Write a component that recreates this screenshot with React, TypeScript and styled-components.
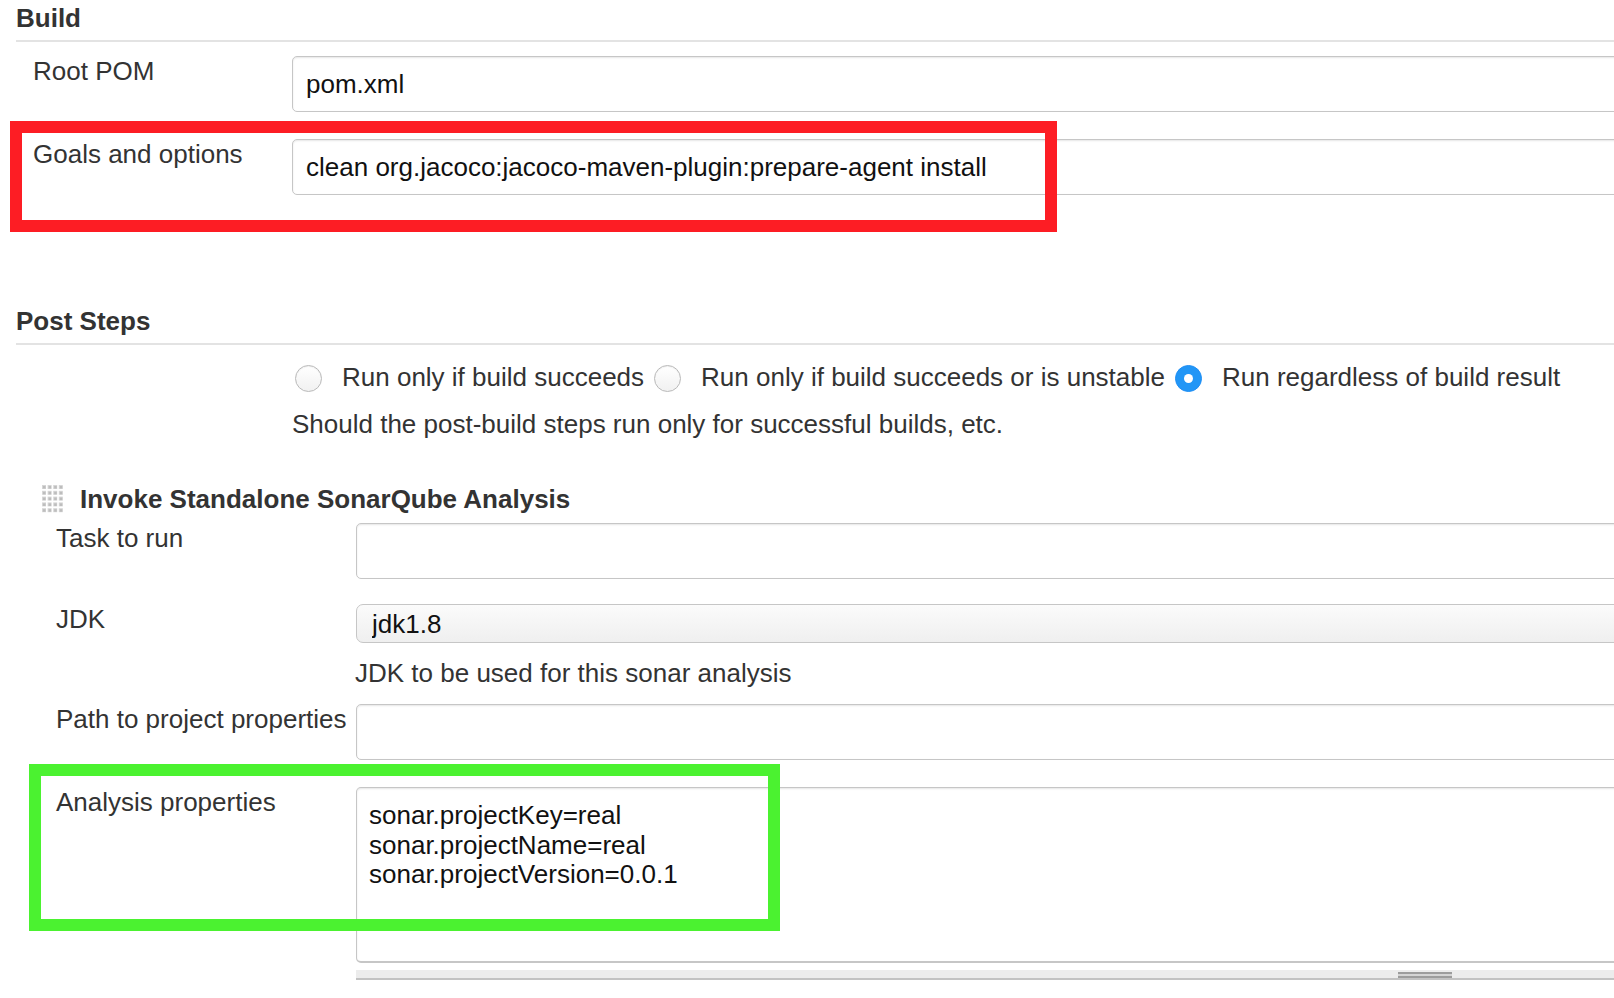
import React from "react";
import styled, { createGlobalStyle } from "styled-components";

const GlobalStyle = createGlobalStyle`
  html, body {
    margin: 0;
    padding: 0;
    background: #fff;
    overflow: hidden;
  }
  body {
    font-family: "Liberation Sans", Arial, Helvetica, sans-serif;
    font-size: 26px;
    color: #333;
  }
`;

// Grip handle drawn next to a build step title
const GripIcon = () => {
  const dots = [];
  for (let r = 0; r < 5; r++) {
    for (let c = 0; c < 4; c++) {
      dots.push(
        <g key={`${r}-${c}`}>
          <rect x={c * 5.6} y={r * 5.8} width={4} height={4} fill="#d6d6d6" />
          <rect x={c * 5.6 + 1} y={r * 5.8 + 1} width={2.5} height={2.5} fill="#bdbdbd" />
        </g>
      );
    }
  }
  return (
    <svg width="22" height="28" viewBox="0 0 22 28">
      {dots}
    </svg>
  );
};

const App: React.FC = () => {
  return (
    <>
      <GlobalStyle />
      <Page>
        <SectionHeader>Build</SectionHeader>

        <Row $indent={17} $top={14}>
          <Label $width={259}>Root POM</Label>
          <Field>
            <TextInput readOnly value="pom.xml" />
          </Field>
        </Row>

        <Row $indent={17} $top={27}>
          <Highlight $color="#fd1d24" style={{ left: -6, top: -18, width: 1047, height: 111 }} />
          <Label $width={259}>Goals and options</Label>
          <Field>
            <TextInput
              readOnly
              value="clean org.jacoco:jacoco-maven-plugin:prepare-agent install"
            />
          </Field>
        </Row>

        <SectionHeader $top={111}>Post Steps</SectionHeader>

        <RadioRow>
          <Radio $first />
          <RadioLabel>Run only if build succeeds</RadioLabel>
          <Radio />
          <RadioLabel>Run only if build succeeds or is unstable</RadioLabel>
          <Radio $checked />
          <RadioLabel>Run regardless of build result</RadioLabel>
        </RadioRow>

        <HelpText $indent={276} $top={17}>
          Should the post-build steps run only for successful builds, etc.
        </HelpText>

        <StepHeader>
          <GripIcon />
          <StepTitle>Invoke Standalone SonarQube Analysis</StepTitle>
        </StepHeader>

        <Row $indent={40} $top={9}>
          <Label $width={300}>Task to run</Label>
          <Field>
            <TextInput readOnly value="" />
          </Field>
        </Row>

        <Row $indent={40} $top={25}>
          <Label $width={300}>JDK</Label>
          <Field>
            <Select value="jdk1.8" onChange={() => undefined}>
              <option value="jdk1.8">jdk1.8</option>
            </Select>
          </Field>
        </Row>

        <HelpText $indent={339} $top={15}>
          JDK to be used for this sonar analysis
        </HelpText>

        <Row $indent={40} $top={16}>
          <Label $width={300}>Path to project properties</Label>
          <Field>
            <TextInput readOnly value="" />
          </Field>
        </Row>

        <Row $indent={40} $top={27}>
          <Highlight $color="#4bf230" style={{ left: 13, top: -23, width: 751, height: 167 }} />
          <Label $width={300}>Analysis properties</Label>
          <Field>
            <TextArea
              readOnly
              value={"sonar.projectKey=real\nsonar.projectName=real\nsonar.projectVersion=0.0.1"}
            />
          </Field>
        </Row>

        <ResizeBar>
          <ResizeGrip />
        </ResizeBar>
      </Page>
    </>
  );
};

export default App;

const Page = styled.div`
  padding: 3px 0 0 16px;
  display: flex;
  flex-direction: column;
`;

const SectionHeader = styled.div<{ $top?: number }>`
  margin-top: ${(p) => p.$top ?? 0}px;
  font-weight: bold;
  font-size: 26px;
  line-height: 30px;
  color: #333;
  padding-bottom: 7px;
  border-bottom: 2px solid #e3e3e3;
  margin-right: -40px;
`;

const Row = styled.div<{ $indent: number; $top: number }>`
  position: relative;
  display: flex;
  align-items: flex-start;
  margin-top: ${(p) => p.$top}px;
  padding-left: ${(p) => p.$indent}px;
`;

const Label = styled.div<{ $width: number }>`
  width: ${(p) => p.$width}px;
  flex-shrink: 0;
  line-height: 30px;
  color: #333;
  white-space: nowrap;
`;

const Field = styled.div`
  flex: 1;
  margin-right: -40px;
  display: flex;
  flex-direction: column;
`;

const TextInput = styled.input`
  box-sizing: border-box;
  width: 100%;
  height: 56px;
  margin: 0;
  padding: 0 13px;
  border: 1px solid #c6c6c6;
  border-radius: 5px;
  box-shadow: inset 0 1px 2px rgba(0, 0, 0, 0.1);
  font-family: "Liberation Sans", Arial, sans-serif;
  font-size: 26px;
  color: #111;
  background: #fff;
  outline: none;
`;

const Select = styled.select`
  box-sizing: border-box;
  width: 100%;
  height: 39px;
  margin: 0;
  padding: 0 15px;
  border: 1px solid #c6c6c6;
  border-radius: 7px;
  appearance: none;
  -webkit-appearance: none;
  background: linear-gradient(#fbfbfb, #efefef);
  font-family: "Liberation Sans", Arial, sans-serif;
  font-size: 26px;
  color: #111;
  outline: none;
`;

const TextArea = styled.textarea`
  box-sizing: border-box;
  width: 100%;
  height: 176px;
  margin: 0;
  padding: 13px 12px 12px;
  border: 1px solid #c6c6c6;
  border-bottom-width: 2px;
  border-radius: 5px;
  box-shadow: inset 0 1px 2px rgba(0, 0, 0, 0.1);
  font-family: "Liberation Sans", Arial, sans-serif;
  font-size: 26px;
  line-height: 29.6px;
  color: #111;
  background: #fff;
  resize: none;
  overflow: hidden;
  outline: none;
  display: block;
`;

const Highlight = styled.div<{ $color: string }>`
  position: absolute;
  box-sizing: border-box;
  border: 12px solid ${(p) => p.$color};
  pointer-events: none;
  z-index: 2;
`;

const RadioRow = styled.div`
  display: flex;
  align-items: flex-start;
  margin-top: 17px;
  padding-left: 276px;
  line-height: 30px;
  white-space: nowrap;
`;

const Radio = styled.span<{ $checked?: boolean; $first?: boolean }>`
  box-sizing: border-box;
  flex-shrink: 0;
  width: 27px;
  height: 27px;
  margin-top: 3px;
  margin-left: ${(p) => (p.$first ? 3 : 10)}px;
  border-radius: 50%;
  display: flex;
  align-items: center;
  justify-content: center;
  border: 1px solid ${(p) => (p.$checked ? "#1e8ef5" : "#b9b9b9")};
  background: ${(p) =>
    p.$checked ? "#2196f6" : "linear-gradient(#ffffff, #f1f1f1)"};
  box-shadow: ${(p) => (p.$checked ? "none" : "inset 0 1px 1px rgba(0,0,0,0.06)")};

  &::after {
    content: "";
    display: ${(p) => (p.$checked ? "block" : "none")};
    width: 9px;
    height: 9px;
    border-radius: 50%;
    background: #fff;
  }
`;

const RadioLabel = styled.span`
  margin-left: 20px;
  color: #333;
`;

const HelpText = styled.div<{ $indent: number; $top: number }>`
  margin-top: ${(p) => p.$top}px;
  padding-left: ${(p) => p.$indent}px;
  line-height: 30px;
  color: #333;
`;

const StepHeader = styled.div`
  display: flex;
  align-items: center;
  gap: 16px;
  margin-top: 45px;
  padding-left: 26px;
  height: 30px;
`;

const StepTitle = styled.span`
  font-weight: bold;
  line-height: 30px;
  color: #333;
`;

const ResizeBar = styled.div`
  box-sizing: border-box;
  margin: 7px -40px 0 340px;
  height: 10px;
  background: #ececec;
  border-bottom: 2px solid #c2c2c2;
  display: flex;
  align-items: flex-start;
`;

const ResizeGrip = styled.div`
  margin-left: 1042px;
  margin-top: 2px;
  width: 54px;
  height: 6px;
  background: linear-gradient(
    #9c9c9c 0,
    #9c9c9c 2px,
    #d4d4d4 2px,
    #d4d4d4 4px,
    #9c9c9c 4px,
    #9c9c9c 6px
  );
`;
